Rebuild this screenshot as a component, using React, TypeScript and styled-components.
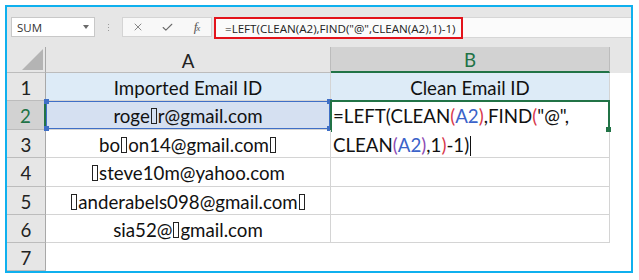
import React from "react";
import styled, { createGlobalStyle, css } from "styled-components";
import { X, Check } from "lucide-react";

const GlobalStyle = createGlobalStyle`
  body {
    margin: 0;
    background: #ffffff;
    font-family: "Lato", "Liberation Sans", sans-serif;
  }
`;

const GREEN = "#217346";
const GRID = "#d4d4d4";
const HEAD_LINE = "#bcbcbc";

const Frame = styled.div`
  margin: 5px;
  width: 628px;
  height: 268px;
  box-sizing: border-box;
  border: 2px solid #0fb0ee;
  background: #ffffff;
  display: flex;
  flex-direction: column;
  overflow: hidden;
`;

const Toolbar = styled.div`
  height: 40px;
  flex: none;
  box-sizing: border-box;
  padding: 10px 0 0 4px;
  background: #e6e6e6;
  display: flex;
  align-items: flex-start;
  font-family: "Open Sans", "Liberation Sans", sans-serif;
`;

const NameBox = styled.div`
  width: 84px;
  height: 20px;
  box-sizing: border-box;
  border: 1px solid #c8c8c8;
  background: #ffffff;
  display: flex;
  align-items: center;
  justify-content: space-between;
  padding: 0 5px 0 5px;
  font-size: 11.5px;
  color: #333;
`;

const DropArrow = styled.span`
  width: 0;
  height: 0;
  border-left: 3px solid transparent;
  border-right: 3px solid transparent;
  border-top: 4px solid #6a6a6a;
`;

const Separator = styled.div`
  width: 27px;
  height: 20px;
  display: flex;
  flex-direction: column;
  align-items: center;
  justify-content: center;
  gap: 2px;
`;

const Dot = styled.span`
  width: 1px;
  height: 1px;
  background: #9a9a9a;
`;

const ButtonGroup = styled.div`
  width: 90px;
  height: 20px;
  box-sizing: border-box;
  border: 1px solid #d4d4d4;
  background: #f8f8f8;
  display: grid;
  grid-template-columns: 29px 30px 1fr;
  align-items: center;
  justify-items: center;
  color: #6a6a6a;
`;

const FxIcon = styled.span`
  font-family: "Liberation Serif", serif;
  font-style: italic;
  font-size: 13px;
  color: #555;
  letter-spacing: -1px;

  small {
    font-size: 9px;
  }
`;

const FormulaInput = styled.div`
  flex: 1;
  height: 21px;
  margin-left: 2px;
  box-sizing: border-box;
  border-top: 1px solid #d6d6d6;
  border-bottom: 1px solid #d6d6d6;
  background: #fbfbfb;
  display: flex;
  align-items: flex-start;
`;

const Highlight = styled.span`
  height: 22px;
  margin-top: -1px;
  box-sizing: border-box;
  border: 2px solid #e3131b;
  padding: 0 6px 0 9px;
  display: flex;
  align-items: center;
  font-size: 11.6px;
  color: #222;
  white-space: nowrap;
`;

const Sheet = styled.div`
  flex: 1;
  display: grid;
  grid-template-columns: 39px 285px 279px 1fr;
  grid-template-rows: 26px 28px 29px 28px 29px 28px 28px 28px;
  font-size: 18.7px;
  color: #111;
`;

const Corner = styled.div`
  background: #e6e6e6;
  border-right: 1px solid #a8a8a8;
  border-bottom: 1px solid ${HEAD_LINE};
  display: flex;
  justify-content: flex-end;
  align-items: flex-end;
  padding: 0 2px 2px 0;
`;

const CornerTriangle = styled.span`
  width: 0;
  height: 0;
  border-left: 21px solid transparent;
  border-bottom: 21px solid #b4b4b4;
`;

const ColHeader = styled.div<{ $selected?: boolean }>`
  background: ${(p) => (p.$selected ? "#d2d2d2" : "#e6e6e6")};
  color: ${(p) => (p.$selected ? GREEN : "#222")};
  border-right: 1px solid ${HEAD_LINE};
  border-bottom: ${(p) => (p.$selected ? `2px solid ${GREEN}` : `1px solid ${HEAD_LINE}`)};
  display: flex;
  align-items: center;
  justify-content: center;
  padding-top: 2px;
`;

const HeaderFill = styled.div`
  background: #e6e6e6;
`;

const RowHeader = styled.div<{ $selected?: boolean }>`
  background: ${(p) => (p.$selected ? "#d2d2d2" : "#e6e6e6")};
  color: ${(p) => (p.$selected ? GREEN : "#222")};
  border-right: ${(p) => (p.$selected ? `2px solid ${GREEN}` : "1px solid #a8a8a8")};
  border-bottom: 1px solid ${HEAD_LINE};
  display: flex;
  align-items: center;
  justify-content: center;
  padding-top: 2px;
`;

const Cell = styled.div<{ $fill?: "title" | "selected" | "none"; $empty?: boolean }>`
  position: relative;
  display: flex;
  align-items: center;
  justify-content: center;
  padding-top: 2px;
  white-space: nowrap;
  ${(p) =>
    !p.$empty &&
    css`
      border-right: 1px solid ${GRID};
      border-bottom: 1px solid ${GRID};
    `}
  ${(p) => p.$fill === "title" && css`background: #ddebf7;`}
  ${(p) =>
    p.$fill === "selected" &&
    css`
      background: #d5e0f1;
      box-shadow: inset 0 0 0 1px #3f6fc6;
    `}
`;

const Handle = styled.span<{ $v: "top" | "bottom"; $h: "left" | "right"; $color?: string }>`
  position: absolute;
  width: 5px;
  height: 5px;
  background: ${(p) => p.$color || "#3f6fc6"};
  ${(p) => p.$v}: -2px;
  ${(p) => p.$h}: -2px;
`;

const EditCell = styled.div`
  grid-row: span 2;
  position: relative;
  background: #ffffff;
  border-right: 1px solid ${GRID};
  border-bottom: 1px solid ${GRID};
  padding: 1px 0 0 2px;
  line-height: 29px;
  white-space: nowrap;

  &::before {
    content: "";
    position: absolute;
    top: -1px;
    left: -1px;
    right: -1px;
    height: 30px;
    border: 2px solid ${GREEN};
    border-bottom: none;
  }
`;

const Ref = styled.span<{ $c: "blue" | "red" | "purple" }>`
  color: ${(p) => (p.$c === "blue" ? "#3b63c9" : p.$c === "red" ? "#d8374b" : "#8d4bb3")};
`;

const Caret = styled.span`
  display: inline-block;
  width: 1px;
  height: 20px;
  margin-left: 1px;
  background: #111;
  vertical-align: -4px;
`;

const Tofu = styled.span`
  display: inline-block;
  width: 4px;
  height: 14px;
  margin: 0 1px;
  border: 1px solid #222;
  vertical-align: -1px;
`;

const T = () => <Tofu />;

const rows: { n: number; a: React.ReactNode }[] = [
  { n: 4, a: <><T />steve10m@yahoo.com</> },
  { n: 5, a: <><T />anderabels098@gmail.com<T /></> },
  { n: 6, a: <>sia52@<T />gmail.com</> },
];

export default function App() {
  return (
    <>
      <GlobalStyle />
      <Frame>
        <Toolbar>
          <NameBox>
            SUM
            <DropArrow />
          </NameBox>
          <Separator>
            <Dot />
            <Dot />
            <Dot />
          </Separator>
          <ButtonGroup>
            <X size={12} strokeWidth={1.6} />
            <Check size={13} strokeWidth={2} />
            <FxIcon>
              f<small>x</small>
            </FxIcon>
          </ButtonGroup>
          <FormulaInput>
            <Highlight>=LEFT(CLEAN(A2),FIND("@",CLEAN(A2),1)-1)</Highlight>
          </FormulaInput>
        </Toolbar>
        <Sheet>
          <Corner>
            <CornerTriangle />
          </Corner>
          <ColHeader>A</ColHeader>
          <ColHeader $selected>B</ColHeader>
          <HeaderFill />

          <RowHeader>1</RowHeader>
          <Cell $fill="title">Imported Email ID</Cell>
          <Cell $fill="title">Clean Email ID</Cell>
          <Cell $empty />

          <RowHeader $selected>2</RowHeader>
          <Cell $fill="selected">
            roge<T />r@gmail.com
            <Handle $v="top" $h="left" />
            <Handle $v="top" $h="right" />
            <Handle $v="bottom" $h="left" />
            <Handle $v="bottom" $h="right" />
          </Cell>
          <EditCell>
            =LEFT(CLEAN<Ref $c="red">(</Ref>
            <Ref $c="blue">A2</Ref>
            <Ref $c="red">)</Ref>,FIND<Ref $c="red">(</Ref>"@",
            <br />
            CLEAN<Ref $c="purple">(</Ref>
            <Ref $c="blue">A2</Ref>
            <Ref $c="purple">)</Ref>,1<Ref $c="red">)</Ref>-1)
            <Caret />
            <Handle $v="top" $h="right" $color={GREEN} style={{ top: 26 }} />
          </EditCell>
          <Cell $empty />

          <RowHeader>3</RowHeader>
          <Cell>
            bo<T />on14@gmail.com<T />
          </Cell>
          <Cell $empty />

          {rows.map((r) => (
            <React.Fragment key={r.n}>
              <RowHeader>{r.n}</RowHeader>
              <Cell>{r.a}</Cell>
              <Cell />
              <Cell $empty />
            </React.Fragment>
          ))}

          <RowHeader>7</RowHeader>
          <Cell $empty />
          <Cell $empty />
          <Cell $empty />
        </Sheet>
      </Frame>
    </>
  );
}
